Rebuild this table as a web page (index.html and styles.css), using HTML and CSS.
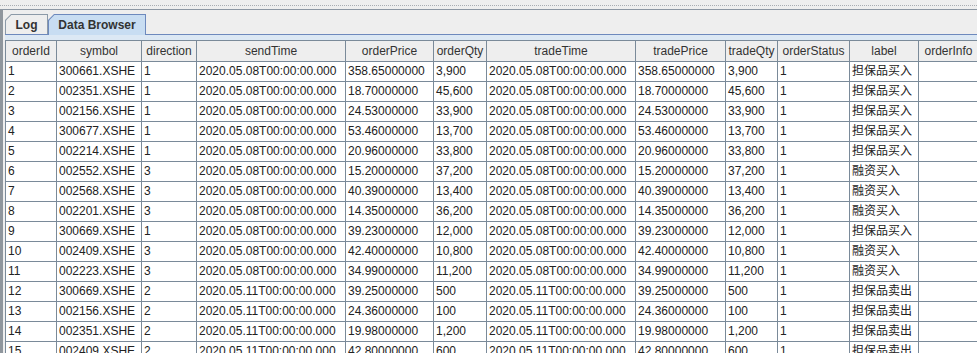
FILE: index.html
```html
<!DOCTYPE html>
<html lang="zh">

<head>
    <meta charset="UTF-8">
    <title>Data Browser</title>
    <link rel="stylesheet" href="styles.css">
</head>

<body>

    <div class="bumps"></div>

    <div class="frame">
        <div class="tabs">
            <div class="tab tab-log"><div class="tab-in">Log</div></div>
            <div class="tab tab-on"><div class="tab-in">Data Browser</div></div>
        </div>

        <div class="pane">
            <div class="grid">
                <div class="row head">
                    <span>orderId</span><span>symbol</span><span>direction</span><span>sendTime</span><span>orderPrice</span><span>orderQty</span><span>tradeTime</span><span>tradePrice</span><span>tradeQty</span><span>orderStatus</span><span>label</span><span>orderInfo</span>
                </div>
                <div class="row">
                    <span>1</span><span>300661.XSHE</span><span>1</span><span>2020.05.08T00:00:00.000</span><span>358.65000000</span><span>3,900</span><span>2020.05.08T00:00:00.000</span><span>358.65000000</span><span>3,900</span><span>1</span><span>担保品买入</span><span></span>
                </div>
                <div class="row">
                    <span>2</span><span>002351.XSHE</span><span>1</span><span>2020.05.08T00:00:00.000</span><span>18.70000000</span><span>45,600</span><span>2020.05.08T00:00:00.000</span><span>18.70000000</span><span>45,600</span><span>1</span><span>担保品买入</span><span></span>
                </div>
                <div class="row">
                    <span>3</span><span>002156.XSHE</span><span>1</span><span>2020.05.08T00:00:00.000</span><span>24.53000000</span><span>33,900</span><span>2020.05.08T00:00:00.000</span><span>24.53000000</span><span>33,900</span><span>1</span><span>担保品买入</span><span></span>
                </div>
                <div class="row">
                    <span>4</span><span>300677.XSHE</span><span>1</span><span>2020.05.08T00:00:00.000</span><span>53.46000000</span><span>13,700</span><span>2020.05.08T00:00:00.000</span><span>53.46000000</span><span>13,700</span><span>1</span><span>担保品买入</span><span></span>
                </div>
                <div class="row">
                    <span>5</span><span>002214.XSHE</span><span>1</span><span>2020.05.08T00:00:00.000</span><span>20.96000000</span><span>33,800</span><span>2020.05.08T00:00:00.000</span><span>20.96000000</span><span>33,800</span><span>1</span><span>担保品买入</span><span></span>
                </div>
                <div class="row">
                    <span>6</span><span>002552.XSHE</span><span>3</span><span>2020.05.08T00:00:00.000</span><span>15.20000000</span><span>37,200</span><span>2020.05.08T00:00:00.000</span><span>15.20000000</span><span>37,200</span><span>1</span><span>融资买入</span><span></span>
                </div>
                <div class="row">
                    <span>7</span><span>002568.XSHE</span><span>3</span><span>2020.05.08T00:00:00.000</span><span>40.39000000</span><span>13,400</span><span>2020.05.08T00:00:00.000</span><span>40.39000000</span><span>13,400</span><span>1</span><span>融资买入</span><span></span>
                </div>
                <div class="row">
                    <span>8</span><span>002201.XSHE</span><span>3</span><span>2020.05.08T00:00:00.000</span><span>14.35000000</span><span>36,200</span><span>2020.05.08T00:00:00.000</span><span>14.35000000</span><span>36,200</span><span>1</span><span>融资买入</span><span></span>
                </div>
                <div class="row">
                    <span>9</span><span>300669.XSHE</span><span>1</span><span>2020.05.08T00:00:00.000</span><span>39.23000000</span><span>12,000</span><span>2020.05.08T00:00:00.000</span><span>39.23000000</span><span>12,000</span><span>1</span><span>担保品买入</span><span></span>
                </div>
                <div class="row">
                    <span>10</span><span>002409.XSHE</span><span>3</span><span>2020.05.08T00:00:00.000</span><span>42.40000000</span><span>10,800</span><span>2020.05.08T00:00:00.000</span><span>42.40000000</span><span>10,800</span><span>1</span><span>融资买入</span><span></span>
                </div>
                <div class="row">
                    <span>11</span><span>002223.XSHE</span><span>3</span><span>2020.05.08T00:00:00.000</span><span>34.99000000</span><span>11,200</span><span>2020.05.08T00:00:00.000</span><span>34.99000000</span><span>11,200</span><span>1</span><span>融资买入</span><span></span>
                </div>
                <div class="row">
                    <span>12</span><span>300669.XSHE</span><span>2</span><span>2020.05.11T00:00:00.000</span><span>39.25000000</span><span>500</span><span>2020.05.11T00:00:00.000</span><span>39.25000000</span><span>500</span><span>1</span><span>担保品卖出</span><span></span>
                </div>
                <div class="row">
                    <span>13</span><span>002156.XSHE</span><span>2</span><span>2020.05.11T00:00:00.000</span><span>24.36000000</span><span>100</span><span>2020.05.11T00:00:00.000</span><span>24.36000000</span><span>100</span><span>1</span><span>担保品卖出</span><span></span>
                </div>
                <div class="row">
                    <span>14</span><span>002351.XSHE</span><span>2</span><span>2020.05.11T00:00:00.000</span><span>19.98000000</span><span>1,200</span><span>2020.05.11T00:00:00.000</span><span>19.98000000</span><span>1,200</span><span>1</span><span>担保品卖出</span><span></span>
                </div>
                <div class="row">
                    <span>15</span><span>002409.XSHE</span><span>2</span><span>2020.05.11T00:00:00.000</span><span>42.80000000</span><span>600</span><span>2020.05.11T00:00:00.000</span><span>42.80000000</span><span>600</span><span>1</span><span>担保品卖出</span><span></span>
                </div>
            </div>
        </div>
    </div>

</body>

</html>
```

FILE: styles.css
```css
html,
body {
    margin: 0;
    height: 100%;
    overflow: hidden;
}

body {
    background-color: #EEEEEE;
    font-family: "Liberation Sans", "Noto Sans CJK SC", sans-serif;
    font-size: 12px;
    color: #222222;
}

/* dotted grip line at the very top */
.bumps {
    height: 9px;
    background-image: linear-gradient(to right, #A9ADB2 1px, transparent 1px);
    background-size: 2px 1px;
    background-repeat: repeat-x;
    background-position: 0 5px;
}

.frame {
    border-top: 1px solid #8C97A3;
    border-left: 3px solid #8F969D;
    padding: 4px 0 0 2px;
}

.tabs {
    display: flex;
    align-items: flex-start;
    height: 20px;
    border-bottom: 1px solid #6D89BD;
}

.tab {
    box-sizing: border-box;
    height: 20px;
    padding: 1px 1px 0 1px;
    background-color: #8C9AA8;
    clip-path: polygon(6px 0, 100% 0, 100% 100%, 0 100%, 0 6px);
}

.tab-in {
    height: 100%;
    display: flex;
    align-items: center;
    justify-content: center;
    font-weight: bold;
    color: #333333;
    background-color: #EEEEEE;
    clip-path: polygon(5.4px 0, 100% 0, 100% 100%, 0 100%, 0 5.4px);
}

.tab-log {
    width: 43px;
}

.tab-on {
    width: 98px;
    height: 21px;
    margin-bottom: -1px;
    background-color: #6D89BD;
}

.tab-on .tab-in {
    background-color: #C8DDF2;
}

.pane {
    border-top: 5px solid #DCE8F4;
}

.grid {
    width: max-content;
    border-top: 1px solid #7A8A99;
    border-left: 1px solid #7A8A99;
}

.row {
    display: grid;
    grid-template-columns: 51px 85px 55px 149px 88px 53px 149px 90px 52px 72px 69px 60px;
}

.row span {
    box-sizing: border-box;
    height: 20px;
    line-height: 19px;
    padding: 0 2px;
    white-space: nowrap;
    overflow: hidden;
    background-color: #FFFFFF;
    border-right: 1px solid #7A8A99;
    border-bottom: 1px solid #7A8A99;
}

.head span {
    height: 21px;
    line-height: 20px;
    text-align: center;
    color: #333333;
    background-color: #EEEEEE;
}
```
